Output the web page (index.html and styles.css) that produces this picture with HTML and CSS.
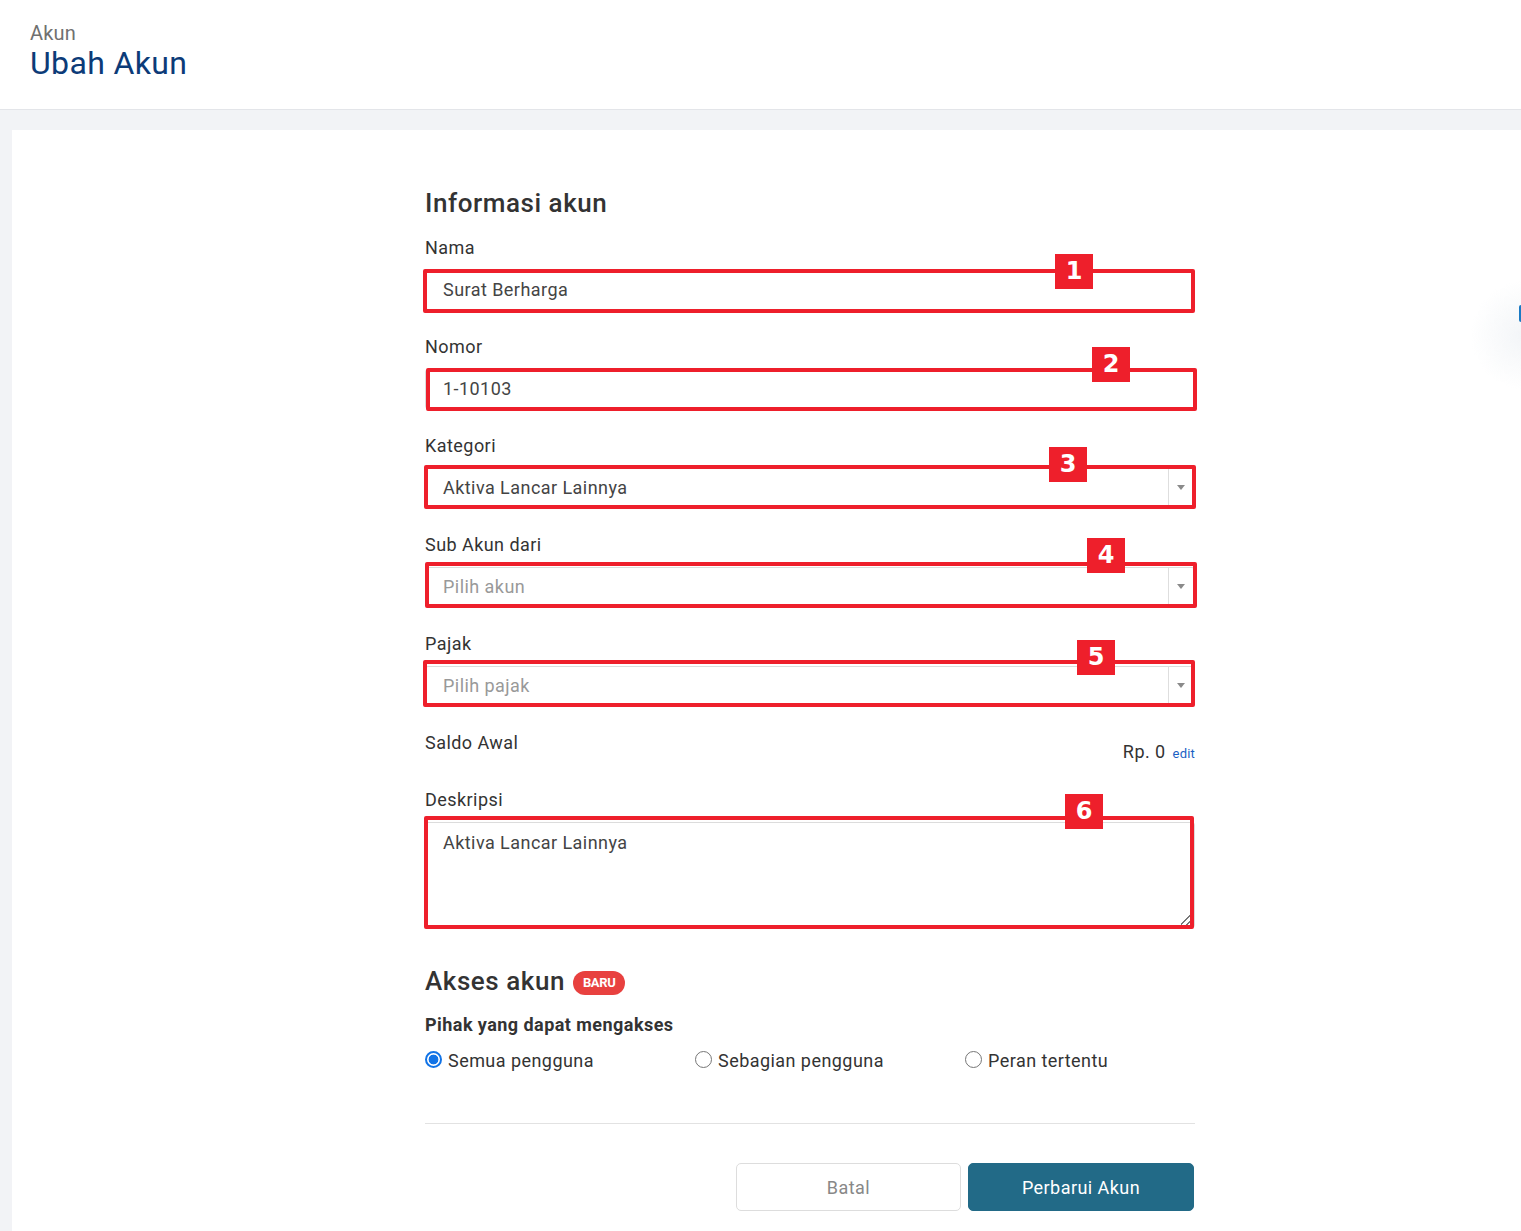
FILE: index.html
```html
<!DOCTYPE html>
<html lang="id">
<head>
<meta charset="utf-8">
<title>Ubah Akun</title>
<link rel="stylesheet" href="styles.css">
</head>
<body>
<header class="page-header">
  <div class="crumb">Akun</div>
  <h1 class="title">Ubah Akun</h1>
</header>
<main class="main">
  <section class="card">
    <form class="form">
      <h2 class="section-title">Informasi akun</h2>

      <div class="field">
        <label class="label">Nama</label>
        <div class="control">
          <div class="input">Surat Berharga</div>
          <div class="ann a1"></div>
          <div class="badge b1">1</div>
        </div>
      </div>

      <div class="field">
        <label class="label">Nomor</label>
        <div class="control">
          <div class="input">1-10103</div>
          <div class="ann a2"></div>
          <div class="badge b2">2</div>
        </div>
      </div>

      <div class="field">
        <label class="label">Kategori</label>
        <div class="control">
          <div class="input select"><span>Aktiva Lancar Lainnya</span><span class="arrow"></span></div>
          <div class="ann a3"></div>
          <div class="badge b3">3</div>
        </div>
      </div>

      <div class="field">
        <label class="label">Sub Akun dari</label>
        <div class="control">
          <div class="input select placeholder"><span>Pilih akun</span><span class="arrow"></span></div>
          <div class="ann a4"></div>
          <div class="badge b4">4</div>
        </div>
      </div>

      <div class="field">
        <label class="label">Pajak</label>
        <div class="control">
          <div class="input select placeholder"><span>Pilih pajak</span><span class="arrow"></span></div>
          <div class="ann a5"></div>
          <div class="badge b5">5</div>
        </div>
      </div>

      <div class="saldo">
        <span class="label">Saldo Awal</span>
        <span class="saldo-value">Rp. 0 <a class="edit" href="#">edit</a></span>
      </div>

      <div class="field">
        <label class="label">Deskripsi</label>
        <div class="control">
          <div class="input textarea">Aktiva Lancar Lainnya<span class="grip"></span></div>
          <div class="ann a6"></div>
          <div class="badge b6">6</div>
        </div>
      </div>

      <h2 class="section-title access">Akses akun <span class="new">BARU</span></h2>
      <div class="sub-label">Pihak yang dapat mengakses</div>
      <div class="radios">
        <div class="radio checked"><span class="dot"></span>Semua pengguna</div>
        <div class="radio"><span class="dot"></span>Sebagian pengguna</div>
        <div class="radio"><span class="dot"></span>Peran tertentu</div>
      </div>

      <hr class="divider">

      <div class="actions">
        <button type="button" class="btn btn-cancel">Batal</button>
        <button type="button" class="btn btn-primary">Perbarui Akun</button>
      </div>
    </form>
  </section>
</main>
<div class="floater"><span class="floater-bar"></span></div>
</body>
</html>
```
FILE: styles.css
```css
* { box-sizing: border-box; }
html, body { margin: 0; padding: 0; }
body {
  font-family: Roboto, "Noto Sans", "Liberation Sans", sans-serif;
  color: #333;
  background: #f2f3f6;
  overflow: hidden;
  height: 1231px;
  letter-spacing: 0.45px;
}
.page-header {
  background: #fff;
  height: 110px;
  border-bottom: 1px solid #e3e5e9;
  padding: 21px 0 0 30px;
}
.crumb {
  font-size: 20px;
  line-height: 24px;
  color: #707070;
  letter-spacing: 0.2px;
}
.title {
  margin: 0;
  font-size: 32px;
  line-height: 36px;
  font-weight: 400;
  color: #0c3b78;
  letter-spacing: 0.35px;
}
.main {
  padding: 20px 0 0 12px;
}
.card {
  background: #fff;
  min-height: 1200px;
  padding: 57px 0 40px 413px;
}
.form {
  width: 770px;
  display: flex;
  flex-direction: column;
}
.section-title {
  margin: 0 0 18px;
  font-size: 26px;
  line-height: 32px;
  font-weight: 500;
  color: #333;
  letter-spacing: 0.55px;
}
.field {
  display: flex;
  flex-direction: column;
  margin-bottom: 26px;
}
.label {
  font-size: 18px;
  line-height: 22px;
  color: #333;
  margin-bottom: 11px;
}
.control { position: relative; }
.input {
  height: 40px;
  border: 1px solid #dcdcdc;
  border-radius: 3px;
  padding: 0 17px;
  font-size: 18px;
  line-height: 38px;
  color: #444;
  background: #fff;
}
.select {
  display: flex;
  justify-content: space-between;
  padding-right: 0;
}
.select .arrow {
  width: 26px;
  border-left: 1px solid #dedede;
  position: relative;
}
.select .arrow::after {
  content: "";
  position: absolute;
  left: 8px;
  top: 16px;
  border-left: 4px solid transparent;
  border-right: 4px solid transparent;
  border-top: 5px solid #8a8a8a;
}
.placeholder { color: #999; }
.textarea {
  height: 106px;
  line-height: 22px;
  padding-top: 9px;
  position: relative;
}
.grip {
  position: absolute;
  right: 2px;
  bottom: 2px;
  width: 11px;
  height: 11px;
  background: linear-gradient(135deg, transparent 45%, #777 45%, #777 52%, transparent 52%, transparent 72%, #777 72%, #777 79%, transparent 79%);
}

/* annotation overlays */
.ann {
  position: absolute;
  border: 4px solid #ee1f2b;
  border-radius: 2px;
  pointer-events: none;
}
.a1 { left: -2px; right: 0; top: -1px; bottom: -3px; }
.a2 { left: 1px; right: -2px; top: -1px; bottom: -2px; }
.a3 { left: -1px; right: -1px; top: -3px; bottom: -1px; }
.a4 { left: 0; right: -2px; top: -5px; bottom: -1px; }
.a5 { left: -2px; right: 0; top: -6px; bottom: -1px; }
.a6 { left: -1px; right: 1px; top: -6px; bottom: -1px; }
.badge {
  position: absolute;
  width: 38px;
  height: 35px;
  background: #ee1f2b;
  color: #fff;
  font-family: "DejaVu Sans", "Liberation Sans", sans-serif;
  font-weight: 700;
  font-size: 24px;
  line-height: 35px;
  text-align: center;
  letter-spacing: 0;
}
.b1 { left: 630px; top: -16px; }
.b2 { left: 667px; top: -22px; }
.b3 { left: 624px; top: -21px; }
.b4 { left: 662px; top: -29px; }
.b5 { left: 652px; top: -26px; }
.b6 { left: 640px; top: -28px; }

.saldo {
  display: flex;
  justify-content: space-between;
  align-items: flex-start;
  height: 30px;
  margin-bottom: 27px;
}
.saldo-value {
  font-size: 18px;
  line-height: 22px;
  margin-top: 9px;
  color: #333;
}
.edit {
  font-size: 13px;
  color: #1b5fc4;
  text-decoration: none;
  margin-left: 2px;
  letter-spacing: 0.2px;
}

.access {
  margin-top: 11px;
  display: flex;
  align-items: center;
  gap: 8px;
  margin-bottom: 17px;
}
.new {
  display: inline-block;
  background: #e8413f;
  color: #fff;
  font-size: 13px;
  font-weight: 700;
  line-height: 24px;
  height: 24px;
  padding: 0 10px;
  border-radius: 12px;
  letter-spacing: -0.4px;
  margin-top: 3px;
}
.sub-label {
  font-size: 18px;
  line-height: 22px;
  font-weight: 700;
  color: #333;
  margin-bottom: 13px;
}
.radios {
  display: flex;
  width: 810px;
}
.radio {
  width: 270px;
  display: flex;
  align-items: center;
  gap: 6px;
  font-size: 18px;
  line-height: 24px;
  color: #333;
}
.dot {
  width: 17px;
  height: 17px;
  border: 1px solid #767676;
  border-radius: 50%;
  margin-top: -4px;
  flex: none;
}
.radio.checked .dot {
  border: 2px solid #1173e6;
  background: radial-gradient(circle, #1173e6 0, #1173e6 4.6px, #fff 5.2px);
}
.divider {
  border: 0;
  border-top: 1px solid #e2e2e2;
  margin: 50px 0 39px;
  width: 770px;
}
.actions {
  display: flex;
  justify-content: flex-end;
  gap: 7px;
  padding-right: 1px;
}
.btn {
  width: 226px;
  height: 48px;
  border-radius: 5px;
  font-family: Roboto, "Noto Sans", "Liberation Sans", sans-serif;
  font-size: 18px;
  letter-spacing: 0.45px;
  cursor: pointer;
}
.btn-cancel {
  width: 225px;
  background: #fff;
  border: 1px solid #dddddd;
  color: #888;
}
.btn-primary {
  background: #226a87;
  border: 1px solid #226a87;
  color: #fff;
}

.floater {
  position: fixed;
  left: 1470px;
  top: 280px;
  width: 110px;
  height: 110px;
  border-radius: 50%;
  background: radial-gradient(circle, rgba(230,235,240,0.5) 0, rgba(255,255,255,0) 70%);
}
.floater-bar {
  position: absolute;
  left: 49px;
  top: 25px;
  width: 3px;
  height: 17px;
  background: #1a7ac4;
  border-radius: 2px 0 0 2px;
}
```
